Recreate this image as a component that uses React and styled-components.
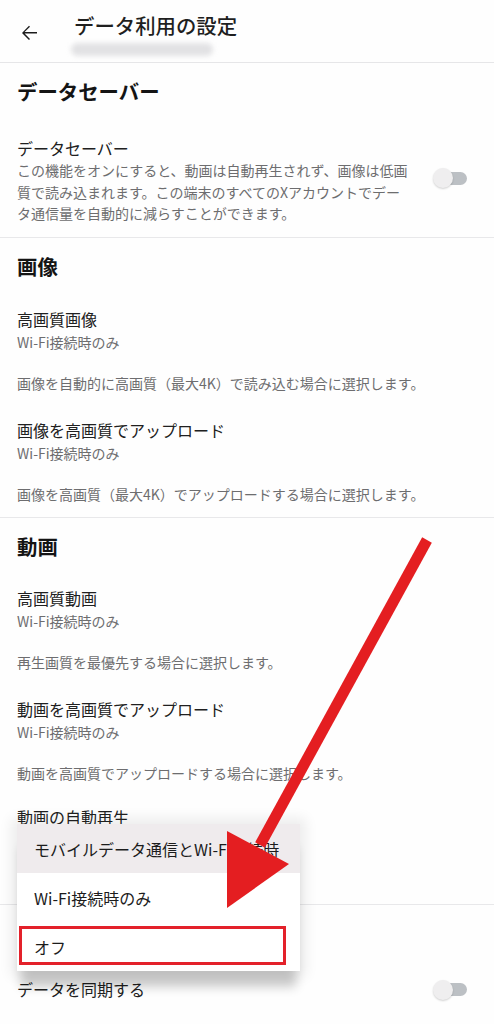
import React from "react";
import styled, { createGlobalStyle } from "styled-components";

const GlobalStyle = createGlobalStyle`
  html, body { margin: 0; padding: 0; background: #ffffff; }
  body {
    font-family: "Noto Sans CJK JP", "Noto Sans", "Liberation Sans", sans-serif;
    color: #1f1f1f;
    -webkit-font-smoothing: antialiased;
  }
  * { box-sizing: border-box; }
`;

const Page = styled.div`
  position: relative;
  width: 494px;
  height: 1024px;
  overflow: hidden;
  background: #fefefe;
`;

const Header = styled.header`
  display: flex;
  align-items: flex-start;
  gap: 33px;
  height: 63px;
  padding-left: 17px;
  border-bottom: 1px solid #e6e6e8;
`;

const BackButton = styled.button`
  display: flex;
  align-items: center;
  justify-content: center;
  width: 24px;
  height: 24px;
  margin-top: 21px;
  padding: 0;
  border: none;
  background: transparent;
  color: #1c1c1c;
`;

const TitleBlock = styled.div`
  display: flex;
  flex-direction: column;
  padding-top: 11px;
`;

const Title = styled.h1`
  margin: 0;
  font-size: 20.4px;
  line-height: 28px;
  font-weight: 500;
  color: #1f1f1f;
`;

const BlurredName = styled.div`
  width: 142px;
  height: 13px;
  margin-top: 4px;
  margin-left: -3px;
  border-radius: 7px;
  background: #e2e2e4;
  filter: blur(2.5px);
`;

const Section = styled.section`
  border-bottom: ${(p) => (p.$last ? "none" : "1px solid #e8e8ea")};
  padding-bottom: ${(p) => p.$pb}px;
`;

const Heading = styled.h2`
  margin: 0;
  padding: 14px 17px 0;
  font-size: 20.4px;
  line-height: 28px;
  font-weight: 700;
  color: #141414;
`;

const ItemList = styled.div`
  display: flex;
  flex-direction: column;
  gap: 25px;
  padding-top: ${(p) => p.$pt}px;
`;

const Item = styled.div`
  display: flex;
  align-items: center;
  justify-content: space-between;
  padding: 0 27px 0 17px;
  margin-top: ${(p) => p.$mt || 0}px;
`;

const ItemText = styled.div`
  display: flex;
  flex-direction: column;
`;

const ItemTitle = styled.div`
  font-size: 16px;
  line-height: 23px;
  color: #202020;
`;

const ItemSub = styled.div`
  font-size: 14px;
  line-height: ${(p) => (p.$desc ? "21.5px" : "22px")};
  color: #6d6d6f;
  white-space: nowrap;
`;

const ItemDesc = styled.div`
  margin-top: 19px;
  font-size: 14px;
  line-height: 22px;
  color: #6d6d6f;
  white-space: nowrap;
`;

const Toggle = styled.div`
  position: relative;
  flex: none;
  width: 34px;
  height: 20px;
  margin-bottom: ${(p) => p.$mb || 0}px;
`;

const Track = styled.div`
  position: absolute;
  right: 0;
  top: 3.5px;
  width: 28px;
  height: 13px;
  border-radius: 7px;
  background: #bcc0c4;
`;

const Knob = styled.div`
  position: absolute;
  left: 0;
  top: 0;
  width: 20px;
  height: 20px;
  border-radius: 50%;
  background: #efeeef;
  box-shadow: 0 1px 2px rgba(0, 0, 0, 0.18);
`;

const Menu = styled.div`
  position: absolute;
  left: 17px;
  top: 824px;
  width: 283px;
  background: #ffffff;
  box-shadow: 0 20px 10px -4px rgba(0, 0, 0, 0.2), 0 0 12px 6px rgba(0, 0, 0, 0.07);
`;

const MenuItem = styled.div`
  display: flex;
  align-items: center;
  height: 49px;
  padding-left: 17px;
  font-size: 16px;
  color: #1c1c1c;
  background: ${(p) => (p.$active ? "#efebed" : "#ffffff")};
  white-space: nowrap;
`;

const Highlight = styled.div`
  position: absolute;
  left: 2px;
  top: 102px;
  width: 267px;
  height: 39px;
  border: 3px solid #e3212a;
  pointer-events: none;
`;

const ArrowLayer = styled.svg`
  position: absolute;
  left: 0;
  top: 0;
  width: 494px;
  height: 1024px;
  pointer-events: none;
`;

function SwitchOff({ mb }) {
  return (
    <Toggle $mb={mb}>
      <Track />
      <Knob />
    </Toggle>
  );
}

function BackIcon() {
  return (
    <svg width="24" height="24" viewBox="0 0 24 24" fill="currentColor">
      <path d="M20 11.1H7.6l5.4-5.4-1-1L5 12l7 7 1-1-5.4-5.4H20z" />
    </svg>
  );
}

export default function App() {
  return (
    <Page>
      <GlobalStyle />
      <Header>
        <BackButton aria-label="戻る">
          <BackIcon />
        </BackButton>
        <TitleBlock>
          <Title>データ利用の設定</Title>
          <BlurredName />
        </TitleBlock>
      </Header>

      <Section $pb={12.5}>
        <Heading>データセーバー</Heading>
        <ItemList $pt={32}>
          <Item>
            <ItemText>
              <ItemTitle>データセーバー</ItemTitle>
              <ItemSub $desc>
                この機能をオンにすると、動画は自動再生されず、画像は低画
                <br />
                質で読み込まれます。この端末のすべてのXアカウントでデー
                <br />
                タ通信量を自動的に減らすことができます。
              </ItemSub>
            </ItemText>
            <SwitchOff mb={5} />
          </Item>
        </ItemList>
      </Section>

      <Section $pb={12}>
        <Heading>画像</Heading>
        <ItemList $pt={27.5}>
          <Item>
            <ItemText>
              <ItemTitle>高画質画像</ItemTitle>
              <ItemSub>Wi-Fi接続時のみ</ItemSub>
              <ItemDesc>画像を自動的に高画質（最大4K）で読み込む場合に選択します。</ItemDesc>
            </ItemText>
          </Item>
          <Item>
            <ItemText>
              <ItemTitle>画像を高画質でアップロード</ItemTitle>
              <ItemSub>Wi-Fi接続時のみ</ItemSub>
              <ItemDesc>画像を高画質（最大4K）でアップロードする場合に選択します。</ItemDesc>
            </ItemText>
          </Item>
        </ItemList>
      </Section>

      <Section $pb={75}>
        <Heading>動画</Heading>
        <ItemList $pt={27}>
          <Item>
            <ItemText>
              <ItemTitle>高画質動画</ItemTitle>
              <ItemSub>Wi-Fi接続時のみ</ItemSub>
              <ItemDesc>再生画質を最優先する場合に選択します。</ItemDesc>
            </ItemText>
          </Item>
          <Item>
            <ItemText>
              <ItemTitle>動画を高画質でアップロード</ItemTitle>
              <ItemSub>Wi-Fi接続時のみ</ItemSub>
              <ItemDesc>動画を高画質でアップロードする場合に選択します。</ItemDesc>
            </ItemText>
          </Item>
          <Item $mt={-3}>
            <ItemText>
              <ItemTitle>動画の自動再生</ItemTitle>
            </ItemText>
          </Item>
        </ItemList>
      </Section>

      <Section $pb={20} $last>
        <ItemList $pt={73.5}>
          <Item>
            <ItemText>
              <ItemTitle>データを同期する</ItemTitle>
            </ItemText>
            <SwitchOff />
          </Item>
        </ItemList>
      </Section>

      <Menu role="menu">
        <MenuItem $active>モバイルデータ通信とWi-Fi接続時</MenuItem>
        <MenuItem>Wi-Fi接続時のみ</MenuItem>
        <MenuItem>オフ</MenuItem>
        <Highlight />
      </Menu>

      <ArrowLayer viewBox="0 0 494 1024">
        <line x1="427" y1="540" x2="260" y2="845" stroke="#e41e21" strokeWidth="11" />
        <polygon points="227,831 289,864 227,908" fill="#e41e21" />
      </ArrowLayer>
    </Page>
  );
}
